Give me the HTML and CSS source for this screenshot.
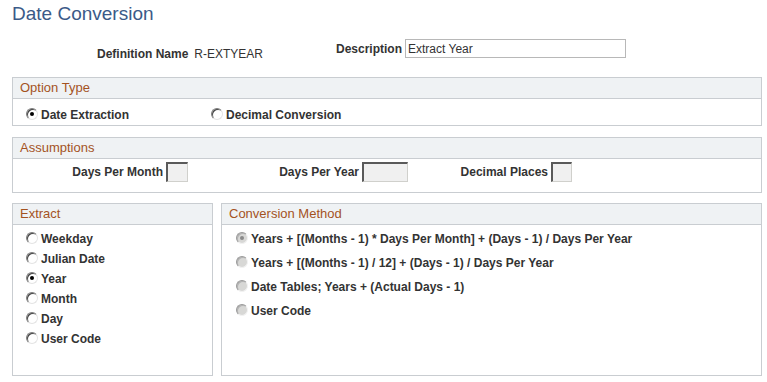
FILE: index.html
```html
<!DOCTYPE html>
<html>
<head>
<meta charset="utf-8">
<title>Date Conversion</title>
<link rel="stylesheet" href="styles.css">
</head>
<body>
<div class="page">
  <h1 class="title">Date Conversion</h1>

  <div class="header">
    <div class="def"><span class="lbl">Definition Name</span><span class="val">R-EXTYEAR</span></div>
    <div class="desc"><span class="lbl">Description</span><span class="textbox">Extract Year</span></div>
  </div>

  <section class="group opt">
    <div class="ghead">Option Type</div>
    <div class="gbody opt-body">
      <div class="ritem first"><span class="radio checked"></span><span class="rlbl">Date Extraction</span></div>
      <div class="ritem"><span class="radio"></span><span class="rlbl">Decimal Conversion</span></div>
    </div>
  </section>

  <section class="group assume">
    <div class="ghead">Assumptions</div>
    <div class="gbody assume-body">
      <div class="field f1"><span class="lbl">Days Per Month</span><span class="numbox w22"></span></div>
      <div class="field f2"><span class="lbl">Days Per Year</span><span class="numbox w46"></span></div>
      <div class="field f3"><span class="lbl">Decimal Places</span><span class="numbox w21"></span></div>
    </div>
  </section>

  <div class="bottom">
    <section class="group extract">
      <div class="ghead">Extract</div>
      <div class="gbody extract-body">
        <div class="ritem"><span class="radio"></span><span class="rlbl">Weekday</span></div>
        <div class="ritem"><span class="radio"></span><span class="rlbl">Julian Date</span></div>
        <div class="ritem"><span class="radio checked"></span><span class="rlbl">Year</span></div>
        <div class="ritem"><span class="radio"></span><span class="rlbl">Month</span></div>
        <div class="ritem"><span class="radio"></span><span class="rlbl">Day</span></div>
        <div class="ritem"><span class="radio"></span><span class="rlbl">User Code</span></div>
      </div>
    </section>
    <section class="group conv">
      <div class="ghead">Conversion Method</div>
      <div class="gbody conv-body">
        <div class="ritem"><span class="radio disabled checked"></span><span class="rlbl">Years + [(Months - 1) * Days Per Month] + (Days - 1) / Days Per Year</span></div>
        <div class="ritem"><span class="radio disabled"></span><span class="rlbl">Years + [(Months - 1) / 12] + (Days - 1) / Days Per Year</span></div>
        <div class="ritem"><span class="radio disabled"></span><span class="rlbl">Date Tables; Years + (Actual Days - 1)</span></div>
        <div class="ritem"><span class="radio disabled"></span><span class="rlbl">User Code</span></div>
      </div>
    </section>
  </div>
</div>
</body>
</html>
```

FILE: styles.css
```css
* { box-sizing: border-box; }
html, body { margin: 0; padding: 0; background: #fff; }
body {
  font-family: "Liberation Sans", Arial, sans-serif;
  font-size: 12px;
  line-height: 14px;
  color: #333;
  width: 767px;
}
.page { padding: 3px 0 0 12px; }

.title {
  margin: 0;
  font-size: 19px;
  line-height: 22px;
  font-weight: normal;
  color: #3b5a88;
}

.header {
  display: flex;
  align-items: flex-start;
  margin-top: 14px;
  padding-left: 85px;
  height: 19px;
}
.lbl { font-weight: bold; color: #333; }
.def { width: 239px; margin-top: 8px; display: flex; gap: 6px; }
.val { color: #333; }
.desc { display: flex; align-items: flex-start; gap: 3px; }
.desc .lbl { margin-top: 3px; }
.textbox {
  display: block;
  width: 221px;
  height: 19px;
  border: 1px solid #b8b8b8;
  padding: 2px 0 0 2px;
  background: #fff;
  color: #333;
}

.group {
  width: 750px;
  border: 1px solid #c9cdd1;
  background: #fff;
}
.ghead {
  height: 21px;
  border-bottom: 1px solid #c9cdd1;
  background: #eff2f4;
  color: #a4521f;
  font-size: 13px;
  line-height: 20px;
  padding-left: 7px;
}

.opt { margin-top: 19px; }
.opt-body {
  height: 26px;
  display: flex;
  padding: 5px 0 0 13px;
}
.opt-body .ritem.first { width: 185px; }

.ritem { display: flex; align-items: center; white-space: nowrap; }
.rlbl { font-weight: bold; color: #333; }

.radio {
  position: relative;
  flex: none;
  width: 12px;
  height: 12px;
  margin: 0 3px 2px 0;
  border-radius: 50%;
  background: #fff;
  border: 1px solid;
  border-color: #7c7c7c #e4e4e4 #e4e4e4 #7c7c7c;
  box-shadow: inset 1px 1px 0 #444;
}
.radio.checked::after {
  content: "";
  position: absolute;
  left: 3px;
  top: 3px;
  width: 4px;
  height: 4px;
  border-radius: 50%;
  background: #000;
}
.radio.disabled {
  background: #d8d8d6;
  border-color: #9a9a9a #f2f2f2 #f2f2f2 #9a9a9a;
  box-shadow: inset 1px 1px 0 #b4b4b4;
}
.radio.disabled.checked::after { background: #8a8a8a; }

.assume { margin-top: 11px; }
.assume-body {
  height: 33px;
  display: flex;
  align-items: flex-start;
  padding-top: 2px;
}
.field { display: flex; justify-content: flex-end; align-items: flex-start; gap: 3px; }
.field .lbl { margin-top: 4px; }
.f1 { width: 175px; }
.f2 { width: 220px; }
.f3 { width: 164px; }
.numbox {
  display: block;
  height: 20px;
  margin-top: 1px;
  background: #f0f0f0;
  border-top: 2px solid #5a5a5a;
  border-left: 2px solid #5a5a5a;
  border-right: 1px solid #d0d0cc;
  border-bottom: 1px solid #d0d0cc;
}
.w22 { width: 22px; }
.w46 { width: 46px; }
.w21 { width: 21px; }

.bottom {
  display: flex;
  gap: 8px;
  margin-top: 10px;
  width: 750px;
}
.extract { width: 201px; }
.conv { width: 541px; }
.extract-body {
  height: 150px;
  padding: 4px 0 0 13px;
}
.extract-body .ritem { height: 20px; line-height: 20px; }
.conv-body {
  height: 150px;
  padding: 2px 0 0 14px;
}
.conv-body .ritem { height: 24px; line-height: 24px; }
```
